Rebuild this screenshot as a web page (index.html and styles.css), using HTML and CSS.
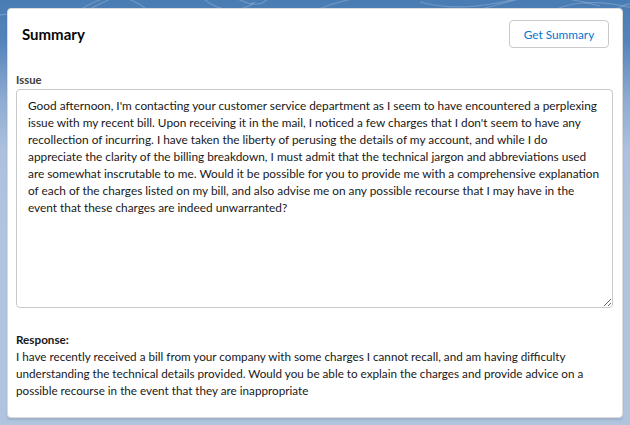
FILE: index.html
```html
<!DOCTYPE html>
<html lang="en">
<head>
<meta charset="utf-8">
<title>Summary</title>
<link rel="stylesheet" href="styles.css">
</head>
<body>
<svg class="bg-pattern" width="630" height="60" viewBox="0 0 630 60" aria-hidden="true">
  <g fill="none" stroke="#ffffff" stroke-opacity="0.2" stroke-width="1.2">
    <path d="M-10 18 C 20 5, 50 30, 80 10 S 130 -5, 150 12"/>
    <path d="M60 30 C 80 10, 110 0, 130 -10"/>
    <path d="M200 -5 C 215 12, 240 14, 255 2"/>
    <path d="M232 -4 C 250 6, 262 8, 270 -4"/>
    <path d="M300 20 C 320 4, 350 0, 380 -8"/>
    <path d="M395 8 C 420 18, 460 16, 500 4 S 560 -4, 600 6"/>
    <path d="M420 2 C 450 10, 480 8, 520 -2"/>
    <path d="M540 20 C 560 0, 600 -2, 640 10"/>
    <path d="M600 30 C 610 10, 620 4, 640 2"/>
  </g>
</svg>
<main class="card">
  <header class="card-header">
    <h2 class="card-title">Summary</h2>
    <button class="btn" type="button">Get Summary</button>
  </header>
  <section class="card-body">
    <label class="field-label" for="issue">Issue</label>
    <textarea id="issue" class="field-textarea">Good afternoon, I'm contacting your customer service department as I seem to have encountered a perplexing issue with my recent bill. Upon receiving it in the mail, I noticed a few charges that I don't seem to have any recollection of incurring. I have taken the liberty of perusing the details of my account, and while I do appreciate the clarity of the billing breakdown, I must admit that the technical jargon and abbreviations used are somewhat inscrutable to me. Would it be possible for you to provide me with a comprehensive explanation of each of the charges listed on my bill, and also advise me on any possible recourse that I may have in the event that these charges are indeed unwarranted?</textarea>
    <div class="response">
      <div class="response-label">Response:</div>
      <p class="response-text">I have recently received a bill from your company with some charges I cannot recall, and am having difficulty understanding the technical details provided. Would you be able to explain the charges and provide advice on a possible recourse in the event that they are inappropriate</p>
    </div>
  </section>
</main>
</body>
</html>
```

FILE: styles.css
```css
html, body {
  margin: 0;
  padding: 0;
}

body {
  width: 630px;
  height: 425px;
  overflow: hidden;
  position: relative;
  font-family: "Lato", "Open Sans", sans-serif;
  font-size: 11.7px;
  color: #181818;
  background: linear-gradient(to bottom, #4a7cb4 0px, #5383bb 40px, #8eacd2 100px, #acc1de 150px, #b0c4df 220px);
  padding: 8px 7px 0 7px;
  box-sizing: border-box;
}

.bg-pattern {
  position: absolute;
  left: 0;
  top: 0;
}

.card {
  position: relative;
  background: #ffffff;
  border: 1px solid #dddbda;
  border-radius: 4px;
  box-shadow: 0 2px 2px rgba(0, 0, 0, 0.10);
  height: 410px;
  box-sizing: border-box;
  padding: 0 8px;
}

.card-header {
  display: flex;
  align-items: center;
  justify-content: space-between;
  padding: 11px 5px 0 6px;
  height: 28px;
}

.card-title {
  margin: 0;
  font-size: 15px;
  font-weight: 700;
  color: #080707;
}

.btn {
  height: 28px;
  width: 100px;
  border: 1px solid #c9c9c9;
  border-radius: 4px;
  background: #ffffff;
  color: #0176d3;
  font-family: inherit;
  font-size: 11.8px;
  padding: 0;
}

.card-body {
  display: flex;
  flex-direction: column;
  padding-top: 25px;
}

.field-label {
  font-size: 11.3px;
  font-weight: 700;
  color: #3e3e3c;
  line-height: 14px;
  margin-bottom: 2px;
}

.field-textarea {
  width: 597px;
  height: 219px;
  box-sizing: border-box;
  border: 1px solid #c9c9c9;
  border-radius: 4px;
  padding: 7px 11px;
  font-family: inherit;
  font-size: 11.83px;
  line-height: 17px;
  color: #181818;
  resize: both;
  margin: 0;
}

.response {
  padding-top: 23px;
}

.response-label {
  font-weight: 700;
  line-height: 17px;
}

.response-text {
  margin: 0;
  line-height: 17px;
}
```
